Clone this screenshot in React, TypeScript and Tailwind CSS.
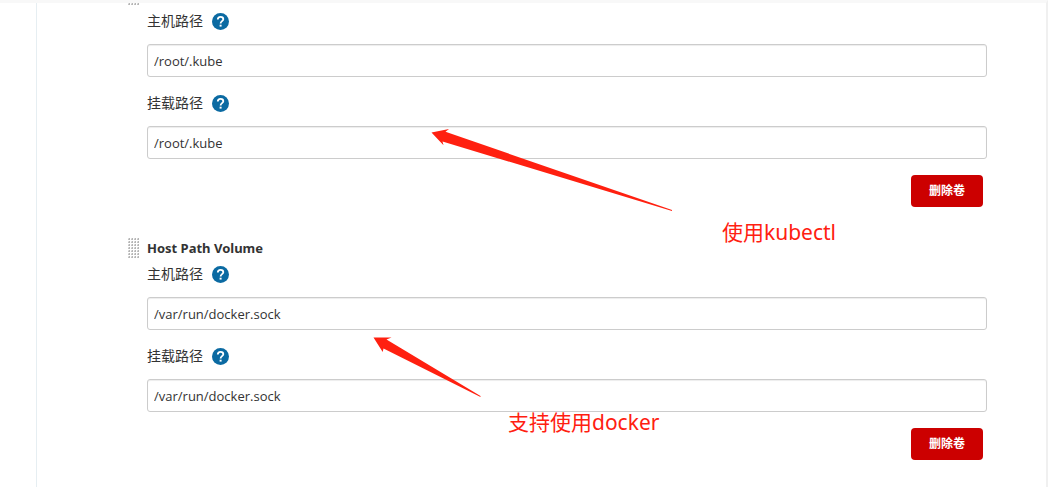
import { useId } from "react";

function HelpIcon() {
  return (
    <svg viewBox="0 0 17 17" className="block size-[17px]" aria-hidden="true">
      <circle cx="8.5" cy="8.5" r="8.5" fill="#0b6aa2" />
      <path
        d="M5.800 6.400c0-1.600 1.200-2.600 2.800-2.600s2.700 1 2.700 2.400c0 1.900-2.700 2-2.700 4.200"
        fill="none"
        stroke="#fff"
        strokeWidth="1.800"
      />
      <rect x="7.600" y="11.700" width="2" height="1.900" fill="#fff" />
    </svg>
  );
}

const columns = [0, 3, 6, 9];

function DragHandle({ rows }: { rows: number[] }) {
  return (
    <svg width="12" height={rows.length * 3} className="block" shapeRendering="crispEdges" aria-hidden="true">
      {rows.map((y) =>
        columns.map((x) => (
          <g key={`${x}-${y}`}>
            <rect x={x} y={y} width="2" height="2" fill="#dedede" />
            <rect x={x + 1} y={y} width="1" height="2" fill="#b5b5b5" />
            <rect x={x} y={y + 1} width="1" height="1" fill="#c4c4c4" />
          </g>
        )),
      )}
    </svg>
  );
}

function Field({ label, value }: { label: string; value: string }) {
  const id = useId();
  return (
    <div>
      <div className="flex h-5 items-center gap-[9px]">
        <label htmlFor={id}>{label}</label>
        <button type="button" aria-label={`${label} help`}>
          <HelpIcon />
        </button>
      </div>
      <input
        id={id}
        type="text"
        defaultValue={value}
        className="mt-[13px] block h-[33px] w-full rounded-[3px] border border-[#ccc] bg-white px-1.5 font-['Open_Sans','Noto_Sans_CJK_SC',sans-serif] text-[13px] shadow-[inset_0_1px_1px_rgba(0,0,0,0.075)] outline-none"
      />
    </div>
  );
}

function Volume({ title, path }: { title?: string; path: string }) {
  return (
    <section className="flex">
      <div className="w-[19px] shrink-0">
        {title ? <DragHandle rows={[0, 3, 6, 9, 12, 15, 18]} /> : <DragHandle rows={[0]} />}
      </div>
      <div className="min-w-0 flex-1">
        {title ? <h2 className="mb-1.5 h-5 text-[13px] leading-5 font-bold">{title}</h2> : <div className="h-2" />}
        <div className="flex flex-col gap-4">
          <Field label="主机路径" value={path} />
          <Field label="挂载路径" value={path} />
          <button
            type="button"
            className="mr-1 h-8 w-[72px] self-end rounded bg-[#c00] text-xs font-bold text-white"
          >
            删除卷
          </button>
        </div>
      </div>
    </section>
  );
}

export default function App() {
  return (
    <div className="relative min-h-screen overflow-hidden border-t-[3px] border-r-2 border-t-[#f8f8f8] border-r-[#f0f0f0] bg-white font-['Noto_Sans','Noto_Sans_CJK_SC',sans-serif] text-sm leading-5 text-[#333]">
      <main className="ml-9 flex min-h-[484px] flex-col gap-[31px] border-l border-[#e6eef2] pr-[59px] pl-[91px]">
        <Volume path="/root/.kube" />
        <Volume title="Host Path Volume" path="/var/run/docker.sock" />
      </main>
      <svg className="pointer-events-none absolute -top-[3px] left-0 h-[487px] w-[1048px]" fill="#ff2010" aria-hidden="true">
        <path d="M431.500 132.500 449 129l-3.500 2.800L672 210v1L442.500 141.500l1 3.800z" />
        <path d="M373.500 337.500 391.500 337.500l-5 2L480.500 396v1L383.500 348.500l-.8 3.500z" />
      </svg>
      <p className="absolute top-[213px] left-[722px] text-[21px] leading-8 text-[#ff2010]">使用kubectl</p>
      <p className="absolute top-[403px] left-[508px] text-[21px] leading-8 text-[#ff2010]">支持使用docker</p>
    </div>
  );
}
